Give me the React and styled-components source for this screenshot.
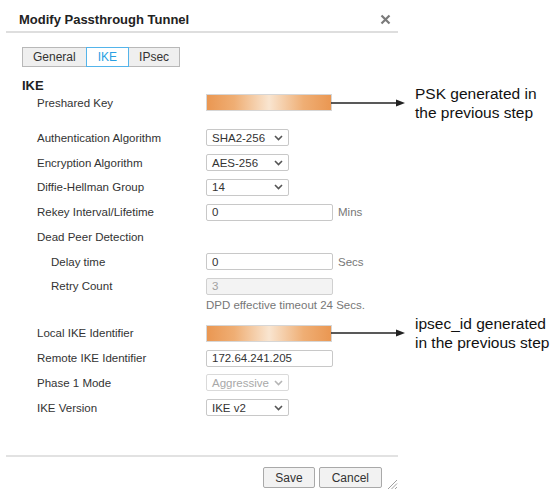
import styled, { createGlobalStyle } from "styled-components";

const GlobalStyle = createGlobalStyle`
  html, body {
    margin: 0;
    padding: 0;
    background: #ffffff;
  }
  body {
    font-family: "Liberation Sans", Arial, sans-serif;
    color: #333;
  }
`;

const Page = styled.div`
  width: 559px;
  height: 496px;
  overflow: hidden;
  background: #fff;
`;

const Dialog = styled.div`
  position: relative;
  margin-left: 6px;
  width: 392px;
  height: 493px;
  display: flex;
  flex-direction: column;
  background: #fff;
`;

const Header = styled.div`
  height: 33px;
  box-sizing: border-box;
  padding: 7px 7px 0 13px;
  display: flex;
  align-items: center;
  justify-content: space-between;
  border-bottom: 2px solid #dedede;
`;

const Title = styled.h1`
  margin: 0;
  font-size: 13px;
  line-height: 15px;
  font-weight: 700;
  color: #222;
`;

const CloseButton = styled.button`
  border: none;
  background: none;
  padding: 0;
  width: 11px;
  height: 11px;
  display: flex;
  cursor: pointer;
`;

const Body = styled.div`
  padding: 14px 0 35px 16px;
`;

const Tabs = styled.div`
  display: flex;
  height: 20px;
`;

const Tab = styled.div`
  box-sizing: border-box;
  height: 20px;
  padding: 0 ${(p) => p.$px || 10}px;
  display: flex;
  align-items: center;
  font-size: 12px;
  border: 1px solid ${(p) => (p.$active ? "#54b4ea" : "#b8b8b8")};
  background: ${(p) => (p.$active ? "#fff" : "#efefef")};
  color: ${(p) => (p.$active ? "#2a9fe2" : "#333")};
  margin-left: ${(p) => (p.$first ? "0" : "-1px")};
  position: relative;
  z-index: ${(p) => (p.$active ? 1 : 0)};
`;

const SectionTitle = styled.h2`
  margin: 12px 0 0;
  font-size: 13px;
  line-height: 13px;
  font-weight: 700;
  color: #222;
`;

const Row = styled.div`
  display: grid;
  grid-template-columns: 169px auto;
  align-items: center;
  height: ${(p) => p.$h || 24.75}px;
  margin-top: ${(p) => p.$mt || 0}px;
  padding-left: 15px;
  font-size: 11.5px;
`;

const Label = styled.div`
  padding-left: ${(p) => (p.$indent ? 14 : 0)}px;
  color: #333;
`;

const Control = styled.div`
  display: flex;
  align-items: center;
  gap: 5px;
`;

const TextInput = styled.div`
  box-sizing: border-box;
  width: 127px;
  height: 17px;
  border: 1px solid ${(p) => (p.$disabled ? "#d0d0d0" : "#c8c8c8")};
  border-radius: 2px;
  background: ${(p) => (p.$disabled ? "#f3f3f3" : "#fff")};
  color: ${(p) => (p.$disabled ? "#a0a0a0" : "#333")};
  padding-left: 5px;
  display: flex;
  align-items: center;
  font-size: 11.5px;
`;

const Redacted = styled.div`
  position: relative;
  box-sizing: border-box;
  width: 126px;
  height: 17px;
  border: 1px solid #d6d6d6;
  background: linear-gradient(
    to right,
    #ea9752 0%,
    #efae74 22%,
    #f9e5d0 50%,
    #efae74 78%,
    #ea9752 100%
  );
`;

const Select = styled.div`
  box-sizing: border-box;
  width: 83px;
  height: 17px;
  border: 1px solid ${(p) => (p.$disabled ? "#dadada" : "#c8c8c8")};
  border-radius: 2px;
  background: #fff;
  color: ${(p) => (p.$disabled ? "#a8a8a8" : "#333")};
  padding: 0 5px 0 5px;
  display: flex;
  align-items: center;
  justify-content: space-between;
  font-size: 11.5px;
`;

const Unit = styled.span`
  color: #777;
  font-size: 11.5px;
`;

const Note = styled.div`
  color: #777;
`;

const Callout = styled.div`
  position: absolute;
  left: 100%;
  top: 50%;
  transform: translateY(-50%);
  display: flex;
  align-items: center;
  gap: 10px;
`;

const CalloutText = styled.div`
  font-family: "Liberation Sans", Arial, sans-serif;
  font-size: 15.5px;
  line-height: 19px;
  color: #111;
  white-space: nowrap;
`;

const Footer = styled.div`
  border-top: 2px solid #e2e2e2;
  padding: 10px 16px 0 0;
  display: flex;
  justify-content: flex-end;
  gap: 4px;
`;

const Button = styled.button`
  box-sizing: border-box;
  height: 21px;
  padding: 0 ${(p) => p.$px || 10}px;
  border: 1px solid #a9a9a9;
  border-radius: 2px;
  background: #f2f2f2;
  color: #333;
  font-family: "Liberation Sans", Arial, sans-serif;
  font-size: 12px;
`;

const Grip = styled.svg`
  position: absolute;
  right: 0;
  bottom: 3px;
`;

function Chevron({ disabled }) {
  return (
    <svg width="9" height="6" viewBox="0 0 9 6">
      <polyline
        points="1,1 4.5,4.5 8,1"
        fill="none"
        stroke={disabled ? "#b5b5b5" : "#555"}
        strokeWidth="1.6"
      />
    </svg>
  );
}

function Arrow() {
  return (
    <svg width="74" height="8" viewBox="0 0 74 8">
      <line x1="0" y1="4" x2="66" y2="4" stroke="#222" strokeWidth="1.3" />
      <polygon points="65,0.5 74,4 65,7.5" fill="#222" />
    </svg>
  );
}

function Field({ label, indent, children, h, mt }) {
  return (
    <Row $h={h} $mt={mt}>
      <Label $indent={indent}>{label}</Label>
      <Control>{children}</Control>
    </Row>
  );
}

function DropDown({ value, disabled }) {
  return (
    <Select $disabled={disabled}>
      <span>{value}</span>
      <Chevron disabled={disabled} />
    </Select>
  );
}

export default function App() {
  return (
    <Page>
      <GlobalStyle />
      <Dialog>
        <Header>
          <Title>Modify Passthrough Tunnel</Title>
          <CloseButton aria-label="Close">
            <svg width="11" height="11" viewBox="0 0 11 11">
              <path d="M1.5 1.5 L9.5 9.5 M9.5 1.5 L1.5 9.5" stroke="#7a7a7a" strokeWidth="2.2" />
            </svg>
          </CloseButton>
        </Header>

        <Body>
          <Tabs>
            <Tab $first>General</Tab>
            <Tab $active $px={11}>IKE</Tab>
            <Tab>IPsec</Tab>
          </Tabs>

          <SectionTitle>IKE</SectionTitle>

          <Field label="Preshared Key" h={21}>
            <Redacted>
              <Callout>
                <Arrow />
                <CalloutText>
                  PSK generated in
                  <br />
                  the previous step
                </CalloutText>
              </Callout>
            </Redacted>
          </Field>
          <Field label="Authentication Algorithm" mt={12.5}>
            <DropDown value="SHA2-256" />
          </Field>
          <Field label="Encryption Algorithm">
            <DropDown value="AES-256" />
          </Field>
          <Field label="Diffie-Hellman Group">
            <DropDown value="14" />
          </Field>
          <Field label="Rekey Interval/Lifetime">
            <TextInput>0</TextInput>
            <Unit>Mins</Unit>
          </Field>
          <Field label="Dead Peer Detection" />
          <Field label="Delay time" indent>
            <TextInput>0</TextInput>
            <Unit>Secs</Unit>
          </Field>
          <Field label="Retry Count" indent>
            <TextInput $disabled>3</TextInput>
          </Field>
          <Row $h={12}>
            <span />
            <Note>DPD effective timeout 24 Secs.</Note>
          </Row>
          <Field label="Local IKE Identifier" mt={10.3}>
            <Redacted>
              <Callout>
                <Arrow />
                <CalloutText>
                  ipsec_id generated
                  <br />
                  in the previous step
                </CalloutText>
              </Callout>
            </Redacted>
          </Field>
          <Field label="Remote IKE Identifier">
            <TextInput>172.64.241.205</TextInput>
          </Field>
          <Field label="Phase 1 Mode">
            <DropDown value="Aggressive" disabled />
          </Field>
          <Field label="IKE Version">
            <DropDown value="IKE v2" />
          </Field>
        </Body>

        <Footer>
          <Button $px={11}>Save</Button>
          <Button $px={12}>Cancel</Button>
        </Footer>

        <Grip width="12" height="12" viewBox="0 0 12 12">
          <path d="M11 2 L2 11 M11 5.5 L5.5 11 M11 9 L9 11" stroke="#a0a0a0" strokeWidth="1" />
        </Grip>
      </Dialog>
    </Page>
  );
}
